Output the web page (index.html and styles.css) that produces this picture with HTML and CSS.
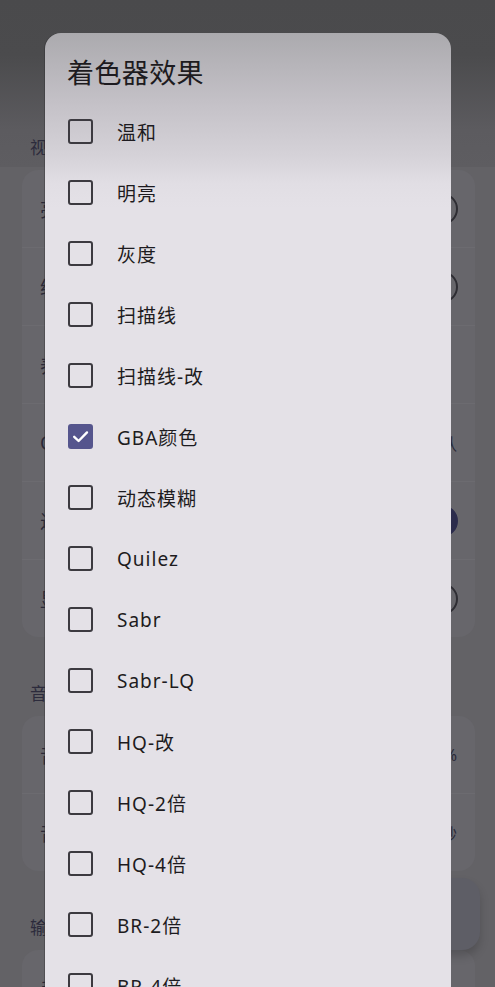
FILE: index.html
```html
<!DOCTYPE html>
<html lang="zh">
<head>
<meta charset="utf-8">
<title>着色器效果</title>
<link rel="stylesheet" href="styles.css">
</head>
<body>
<div class="page">
  <div class="appbar">
    <div class="section-title first">视频</div>
  </div>
  <div class="card">
    <div class="row"><span>亮度</span><span class="switch"></span></div>
    <div class="row"><span>纵横比</span><span class="switch"></span></div>
    <div class="row"><span>养成模式</span></div>
    <div class="row"><span>OpenGL</span><span class="val">默认</span></div>
    <div class="row"><span>过滤</span><span class="switch on"></span></div>
    <div class="row last"><span>显示帧率</span><span class="switch"></span></div>
  </div>
  <div class="section-title">音频</div>
  <div class="card">
    <div class="row"><span>音量</span><span class="val">100%</span></div>
    <div class="row last"><span>音频延迟</span><span class="val">64毫秒</span></div>
  </div>
  <div class="section-title">输入</div>
  <div class="card">
    <div class="row"><span>手柄</span></div>
  </div>
  <div class="fab"></div>

  <div class="dialog">
    <div class="dialog-title">着色器效果</div>
    <ul class="list">
      <li class="item"><span class="box"></span><span class="label">温和</span></li>
      <li class="item"><span class="box"></span><span class="label">明亮</span></li>
      <li class="item"><span class="box"></span><span class="label">灰度</span></li>
      <li class="item"><span class="box"></span><span class="label">扫描线</span></li>
      <li class="item"><span class="box"></span><span class="label">扫描线-改</span></li>
      <li class="item"><span class="box checked"><svg viewBox="0 0 25 25" width="25" height="25"><path d="M6.2 12.8 L10.6 17 L19 8.4" fill="none" stroke="#fff" stroke-width="2.4" stroke-linecap="round" stroke-linejoin="round"/></svg></span><span class="label">GBA颜色</span></li>
      <li class="item"><span class="box"></span><span class="label">动态模糊</span></li>
      <li class="item"><span class="box"></span><span class="label">Quilez</span></li>
      <li class="item"><span class="box"></span><span class="label">Sabr</span></li>
      <li class="item"><span class="box"></span><span class="label">Sabr-LQ</span></li>
      <li class="item"><span class="box"></span><span class="label">HQ-改</span></li>
      <li class="item"><span class="box"></span><span class="label">HQ-2倍</span></li>
      <li class="item"><span class="box"></span><span class="label">HQ-4倍</span></li>
      <li class="item"><span class="box"></span><span class="label">BR-2倍</span></li>
      <li class="item"><span class="box"></span><span class="label">BR-4倍</span></li>
    </ul>
  </div>
</div>
</body>
</html>
```

FILE: styles.css
```css
html, body {
  margin: 0;
  padding: 0;
  height: 100%;
  overflow: hidden;
}
body {
  background: #636266;
  font-family: "Noto Sans", "Noto Sans CJK SC", sans-serif;
  color: #1d1b20;
}
.page {
  position: relative;
  width: 495px;
  height: 987px;
  overflow: hidden;
}
.appbar {
  height: 167px;
  background: linear-gradient(to bottom, #4a4a4c 0, #4b4b4d 55px, #5c5b5f 130px, #5e5d61 167px);
  display: flex;
  flex-direction: column;
  justify-content: flex-end;
}
.section-title {
  color: #2c2b3c;
  font-size: 17px;
  line-height: 24px;
  padding: 0 30px;
  height: 24px;
}
.section-title.first {
  margin-bottom: 7px;
}
.section-title:not(.first) {
  margin: 45px 0 10px;
}
.card {
  margin: 3px 20px 0 22px;
  background: #67666b;
  border-radius: 16px;
  overflow: hidden;
}
.row {
  height: 77px;
  display: flex;
  align-items: center;
  justify-content: space-between;
  padding: 0 18px 0 18px;
  border-bottom: 1px solid #6c6b70;
  color: #2a2938;
  font-size: 19px;
}
.row.last { border-bottom: none; }
.val { font-size: 16px; }
.switch {
  width: 52px;
  height: 32px;
  box-sizing: border-box;
  border: 2px solid #2e2d33;
  border-radius: 16px;
  margin-right: -1px;
}
.switch.on {
  background: #2c2c4c;
  border-color: #2c2c4c;
}
.fab {
  position: absolute;
  right: 15px;
  top: 878px;
  width: 90px;
  height: 72px;
  border-radius: 18px;
  background: #5e5e66;
  box-shadow: 0 6px 10px rgba(0,0,0,0.18);
}
.dialog {
  position: absolute;
  left: 45px;
  top: 33px;
  width: 406px;
  height: 1100px;
  border-radius: 16px;
  background: linear-gradient(to bottom, #abaaae 0, #c4c1c7 70px, #d6d3d9 125px, #e1dee4 150px, #e4e1e7 175px, #e4e1e7 100%);
  box-shadow: -1px 0 0 rgba(40,40,44,0.35);
}
.dialog-title {
  font-family: "Noto Sans CJK SC", sans-serif;
  font-size: 27px;
  line-height: 36px;
  padding: 21px 22px 0;
  letter-spacing: 0.4px;
  color: #1d1b20;
}
.list {
  list-style: none;
  margin: 11px 0 0;
  padding: 0;
}
.item {
  height: 61px;
  display: flex;
  align-items: center;
  padding-left: 23px;
  gap: 24px;
}
.box {
  width: 25px;
  height: 25px;
  box-sizing: border-box;
  border: 2.4px solid #3c3a40;
  border-radius: 3px;
  flex: none;
  position: relative;
}
.box.checked {
  background: #55558d;
  border-color: #55558d;
}
.box.checked svg {
  position: absolute;
  left: -2.4px;
  top: -2.4px;
}
.label {
  font-size: 19px;
  color: #1d1b20;
  letter-spacing: 1px;
}
```
